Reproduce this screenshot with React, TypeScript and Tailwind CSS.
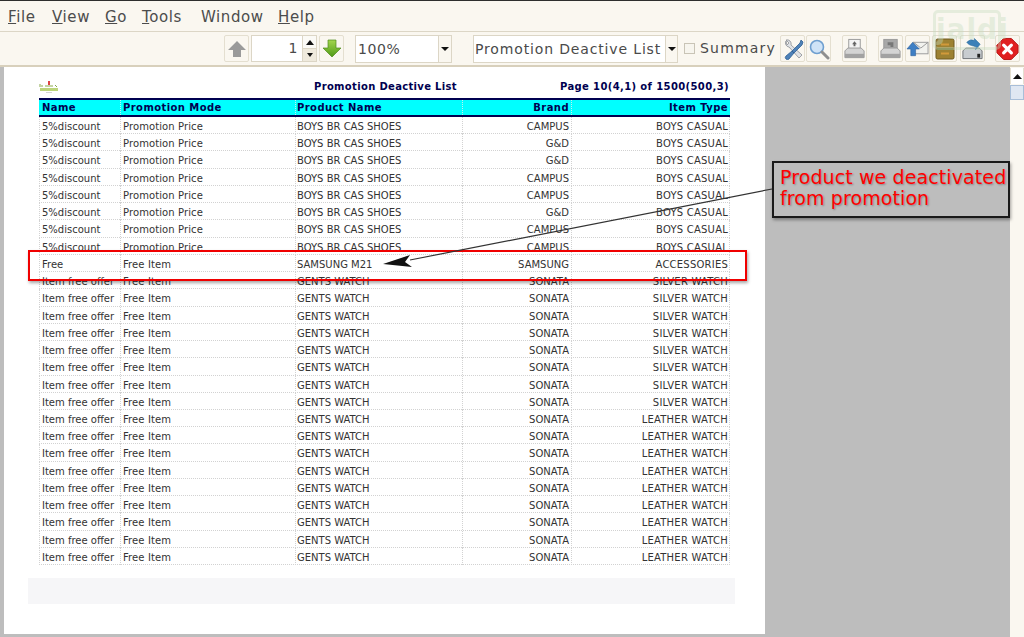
import React from 'react';

const rows: [string, string, string, string, string][] = [
  ['5%discount', 'Promotion Price', 'BOYS BR CAS SHOES', 'CAMPUS', 'BOYS CASUAL'],
  ['5%discount', 'Promotion Price', 'BOYS BR CAS SHOES', 'G&D', 'BOYS CASUAL'],
  ['5%discount', 'Promotion Price', 'BOYS BR CAS SHOES', 'G&D', 'BOYS CASUAL'],
  ['5%discount', 'Promotion Price', 'BOYS BR CAS SHOES', 'CAMPUS', 'BOYS CASUAL'],
  ['5%discount', 'Promotion Price', 'BOYS BR CAS SHOES', 'CAMPUS', 'BOYS CASUAL'],
  ['5%discount', 'Promotion Price', 'BOYS BR CAS SHOES', 'G&D', 'BOYS CASUAL'],
  ['5%discount', 'Promotion Price', 'BOYS BR CAS SHOES', 'CAMPUS', 'BOYS CASUAL'],
  ['5%discount', 'Promotion Price', 'BOYS BR CAS SHOES', 'CAMPUS', 'BOYS CASUAL'],
  ['Free', 'Free Item', 'SAMSUNG M21', 'SAMSUNG', 'ACCESSORIES'],
  ...Array.from({ length: 8 }, (): [string, string, string, string, string] => ['Item free offer', 'Free Item', 'GENTS WATCH', 'SONATA', 'SILVER WATCH']),
  ...Array.from({ length: 9 }, (): [string, string, string, string, string] => ['Item free offer', 'Free Item', 'GENTS WATCH', 'SONATA', 'LEATHER WATCH']),
];

const Btn = ({ className, children }: { className: string; children: React.ReactNode }) => (
  <div className={`h-[27px] w-[25px] flex items-center justify-center border border-[#e4dfd0] rounded-[2px] ${className}`}>{children}</div>
);

const Menu = ({ u, rest, className }: { u: string; rest: string; className?: string }) => (
  <span className={className}><span className="underline">{u}</span>{rest}</span>
);

const Printer = ({ dark }: { dark?: boolean }) => (
  <svg width="24" height="24" viewBox="0 0 24 24">
    <rect x={dark ? 5 : 6} y="2" width={dark ? 14 : 12} height="10" fill={dark ? '#a8a8a8' : '#f4f4f4'} stroke="#9a9a9a" />
    {!dark && <path d="M12 4l-2.5 3h5zM11 7h2v2h-2z" fill="#666" />}
    {dark && <path d="M9 5h6v5h-3V8H9z" fill="#777" />}
    <path d="M2 14l3-3h14l3 3v7H2z" fill="#d4d4d4" stroke="#9a9a9a" />
    <rect x="2" y="17" width="20" height="4" fill="#a2a2a2" />
  </svg>
);

export default function App() {
  return (
    <div className="relative w-[1024px] h-[637px] overflow-hidden flex flex-col bg-[#bdbdbd] font-['DejaVu_Sans',sans-serif]">
      <div className="h-px bg-[#2e2e2e]" />
      {/* menu bar */}
      <div className="h-[31px] bg-[#faf7f0] border-b border-[#dcd6c6] flex items-center pl-2 pt-[2px] text-[15px] tracking-[0.6px] text-[#4c4c4c]">
        <Menu u="F" rest="ile" className="w-[44px]" />
        <Menu u="V" rest="iew" className="w-[53px]" />
        <Menu u="G" rest="o" className="w-[37px]" />
        <Menu u="T" rest="ools" className="w-[59px]" />
        <span className="w-[77px]">Window</span>
        <Menu u="H" rest="elp" />
      </div>
      {/* toolbar */}
      <div className="h-[35px] bg-[#faf7f0] border-b-2 border-[#d8d0bc] flex items-center pl-[224px] text-[14px] tracking-[0.6px] text-[#4a4a4a]">
        <Btn className="">
          <svg width="20" height="20" viewBox="0 0 20 20"><path d="M10 2L19 11H14V18H6V11H1z" fill="#9a9a9a" /></svg>
        </Btn>
        <div className="ml-[2px] h-[27px] w-[66px] flex border border-[#dcd6c6] bg-white">
          <div className="flex-1 text-right pr-[4px] leading-[25px]">1</div>
          <div className="w-[14px] border-l border-[#dcd6c6] flex flex-col">
            <div className="flex-1 bg-[#fbfaf6] border-b border-[#dcd6c6] flex items-center justify-center">
              <svg width="8" height="5"><path d="M4 0L8 5H0z" fill="#111" /></svg>
            </div>
            <div className="flex-1 bg-[#efeadd] flex items-center justify-center">
              <svg width="6" height="4"><path d="M0 0H6L3 4z" fill="#111" /></svg>
            </div>
          </div>
        </div>
        <Btn className="ml-[2px]">
          <svg width="20" height="20" viewBox="0 0 20 20">
            <defs><linearGradient id="g" x1="0" y1="0" x2="0" y2="1"><stop offset="0" stopColor="#a4d64e" /><stop offset="1" stopColor="#4f9a17" /></linearGradient></defs>
            <path d="M6 1H14V9H19L10 18L1 9H6z" fill="url(#g)" stroke="#4e8a1c" strokeWidth="0.7" />
          </svg>
        </Btn>
        <div className="ml-[11px] h-[28px] w-[97px] flex border border-[#dcd6c6] bg-white">
          <div className="flex-1 pl-[2px] leading-[26px]">100%</div>
          <div className="w-[13px] border-l border-[#dcd6c6] bg-[#faf7f0] flex items-center justify-center">
            <svg width="8" height="4"><path d="M0 0H8L4 4z" fill="#111" /></svg>
          </div>
        </div>
        <div className="ml-[21px] h-[28px] w-[205px] flex border border-[#dcd6c6] bg-white">
          <div className="flex-1 pl-[1px] leading-[26px] whitespace-nowrap tracking-[0.85px]">Promotion Deactive List</div>
          <div className="w-[12px] border-l border-[#dcd6c6] bg-[#faf7f0] flex items-center justify-center">
            <svg width="8" height="4"><path d="M0 0H8L4 4z" fill="#111" /></svg>
          </div>
        </div>
        <div className="ml-[6px] w-[11px] h-[11px] border border-[#c9c4b6] bg-[#f7f5ee]" />
        <span className="ml-[5px] w-[80px] whitespace-nowrap tracking-[1.2px]">Summary</span>
        <Btn className="">
          <svg width="22" height="22" viewBox="0 0 22 22">
            <path d="M4 3a4 4 0 0 0 3 6l10 11 3-3L9 7a4 4 0 0 0-5-5l3 3-2 2z" fill="#dfe2e6" stroke="#8b8f94" strokeWidth="0.8" />
            <path d="M19 2l-1 3-8 8 2 2 8-8 1-3zM10 13l-6 5a2 2 0 0 0 3 3l5-6z" fill="#4f82b8" stroke="#2f5f94" strokeWidth="0.8" />
          </svg>
        </Btn>
        <Btn className="ml-px">
          <svg width="22" height="22" viewBox="0 0 22 22">
            <circle cx="9" cy="9" r="6.5" fill="#cfe3f7" stroke="#6f9fd0" strokeWidth="1.6" />
            <path d="M14 14l6 6" stroke="#8f8f8f" strokeWidth="3" strokeLinecap="round" />
          </svg>
        </Btn>
        <Btn className="ml-[11px]"><Printer /></Btn>
        <Btn className="ml-[11px]"><Printer dark /></Btn>
        <Btn className="ml-[2px]">
          <svg width="24" height="22" viewBox="0 0 24 22">
            <rect x="8" y="4" width="15" height="12" fill="#f2f2ee" stroke="#9a9a9a" />
            <path d="M8 4l7.5 6L23 4" fill="none" stroke="#9a9a9a" />
            <path d="M7 4l7 7H10v7H5v-7H1z" fill="#3f7fc4" stroke="#2c5f9a" strokeWidth="0.6" />
          </svg>
        </Btn>
        <Btn className="ml-[2px]">
          <svg width="22" height="24" viewBox="0 0 22 24">
            <rect x="2" y="2" width="18" height="20" rx="1.5" fill="#9d8132" stroke="#6e5a20" />
            <path d="M3 12h16" stroke="#5f6a24" strokeWidth="1.5" />
            <rect x="7" y="6.5" width="8" height="2" fill="#d29a3a" />
            <rect x="7" y="15.5" width="8" height="2" fill="#d29a3a" />
          </svg>
        </Btn>
        <Btn className="ml-[3px]">
          <svg width="24" height="24" viewBox="0 0 24 24">
            <path d="M2 14l3-3h14l3 3v8H2z" fill="#c8ccd0" stroke="#6e7276" />
            <rect x="17" y="17" width="3" height="4" fill="#222" />
            <path d="M6 5a7 7 0 0 1 8-2v-2l6 6-5 6 1-3c-4-2-7-1-10-5z" fill="#3c80b8" stroke="#2a6a9a" strokeWidth="0.6" />
          </svg>
        </Btn>
        <Btn className="ml-[10px]">
          <svg width="24" height="24" viewBox="0 0 24 24">
            <path d="M8 1H16L23 8V16L16 23H8L1 16V8z" fill="#e02020" stroke="#b51616" />
            <path d="M8 8l8 8M16 8l-8 8" stroke="#fff" strokeWidth="3.4" strokeLinecap="round" />
          </svg>
        </Btn>
      </div>
      {/* content */}
      <div className="flex-1 flex min-h-0">
        <div className="w-[4px]" />
        <div className="w-[761px] h-[567px] bg-white pl-[35px] flex flex-col">
          <div className="h-[31px] w-[691px] relative flex items-end pb-[4px] text-[10px] font-bold tracking-[0.33px] text-[#000050]">
            <svg width="20" height="14" viewBox="0 0 20 14" className="absolute left-0 top-[13px]">
              <path d="M10 1v4" stroke="#d44" strokeWidth="2" />
              <path d="M1 4v3M3 5v2M6 6h8M16 5l2 2" stroke="#8aa84a" strokeWidth="1" fill="none" />
              <rect x="1" y="8" width="18" height="3" fill="#bcd47a" />
              <rect x="7" y="12" width="6" height="1" fill="#d4d4d4" />
            </svg>
            <span className="ml-[275px]">Promotion Deactive List</span>
            <span className="ml-auto mr-px tracking-[0.38px]">Page 10(4,1) of 1500(500,3)</span>
          </div>
          <div className="grid grid-cols-[81px_175px_167px_109px_159px] w-[691px] h-[19px] border-t-2 border-b-2 border-[#000050] bg-[#00ffff] text-[10px] font-bold tracking-[0.42px] text-[#000050] leading-[15px]">
            <div className="pl-[3px]">Name</div>
            <div className="pl-[2px] border-l border-dotted border-[#c4eeee]">Promotion Mode</div>
            <div className="pl-[1px] border-l border-dotted border-[#c4eeee]">Product Name</div>
            <div className="pr-[2px] text-right border-l border-dotted border-[#c4eeee]">Brand</div>
            <div className="pr-[2px] text-right border-l border-dotted border-[#c4eeee]">Item Type</div>
          </div>
          {rows.map((r, i) => (
            <div key={i} className="grid grid-cols-[80px_175px_167px_109px_158px] w-[691px] h-[17.24px] border-b border-x border-dotted border-[#d2d2d2] text-[10px] text-[#333] leading-[15px] whitespace-nowrap">
              <div className="pl-[2px] pt-[2px]">{r[0]}</div>
              <div className="pl-[2px] pt-[2px] border-l border-dotted border-[#d2d2d2] tracking-[0.1px]">{r[1]}</div>
              <div className="pl-[1px] pt-[2px] border-l border-dotted border-[#d2d2d2]">{r[2]}</div>
              <div className="pr-[2px] pt-[2px] text-right border-l border-dotted border-[#d2d2d2]">{r[3]}</div>
              <div className="pr-[1px] pt-[2px] text-right border-l border-dotted border-[#d2d2d2] tracking-[0.22px]">{r[4]}</div>
            </div>
          ))}
          <div className="mt-[13px] -ml-[11px] w-[707px] h-[26px] bg-[#f6f6f8]" />
        </div>
        <div className="flex-1" />
        <div className="w-[14px] h-full bg-[#faf7f0] flex flex-col items-center">
          <div className="w-full h-[16px] mt-px bg-white border-x border-[#e4dfd0] flex items-center justify-center">
            <svg width="9" height="5"><path d="M4.5 0L9 5H0z" fill="#111" /></svg>
          </div>
          <div className="w-full h-[15px] mt-px bg-[#dfe7f2] border border-[#a8bed8]" />
        </div>
      </div>

      {/* watermark */}
      <div className="absolute left-[933px] top-[10px] w-[68px] h-[40px] border-[3px] border-[#c6dcc0] rounded-[5px] opacity-40 text-[#c6dcc0] text-[28px] font-bold leading-[34px] text-center tracking-[1px] pointer-events-none">jaldi</div>

      {/* annotations */}
      <div className="absolute left-[28px] top-[250px] w-[719px] h-[31px] border-2 border-[#f00000] shadow-[1px_2px_3px_rgba(0,0,0,0.35)]" />
      <svg className="absolute left-0 top-0 pointer-events-none" width="1024" height="637">
        <path d="M772 189L410 260" stroke="#333" strokeWidth="1.2" />
        <path d="M383 264L410 255L405 262L412 267z" fill="#111" />
      </svg>
      <div className="absolute left-[772px] top-[161px] w-[238px] h-[57px] bg-[#bdbdbd] border-2 border-[#1a1a1a] shadow-[1px_2px_3px_rgba(0,0,0,0.35)] pl-[6px] pt-[4px] text-[19px] tracking-[0.1px] leading-[21px] text-[#ff0000] whitespace-nowrap [text-shadow:1px_1px_2px_rgba(0,0,0,0.3)]">
        Product we deactivated<br />from promotion
      </div>
    </div>
  );
}
